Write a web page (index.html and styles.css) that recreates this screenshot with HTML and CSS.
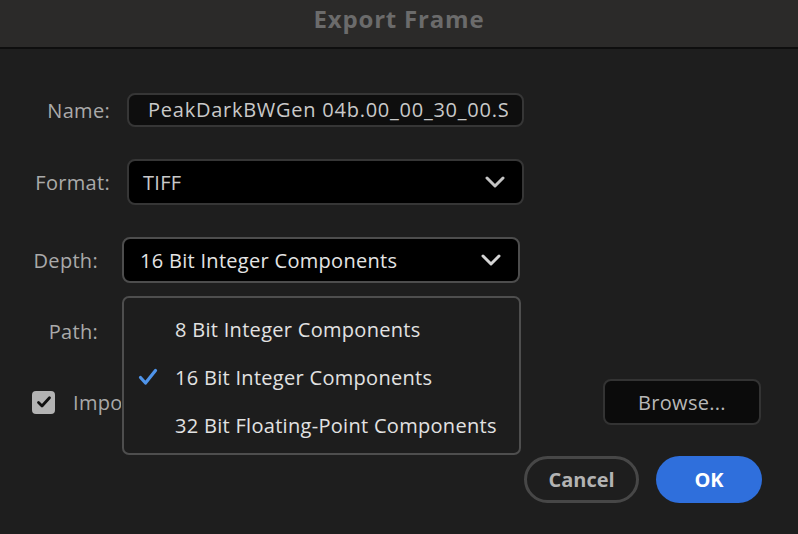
FILE: index.html
```html
<!DOCTYPE html>
<html>
<head>
<meta charset="utf-8">
<link rel="stylesheet" href="styles.css">
</head>
<body>
<div class="dialog">
  <div class="titlebar"><span class="title">Export Frame</span></div>
  <div class="form">
    <div class="row row-name">
      <label class="label label-wide">Name:</label>
      <div class="field field-name"><span class="name-text">PeakDarkBWGen 04b.00_00_30_00.S</span></div>
    </div>
    <div class="row row-format">
      <label class="label label-wide">Format:</label>
      <div class="field select select-format">
        <span class="select-text">TIFF</span>
        <svg class="chevron" width="20" height="12" viewBox="0 0 20 12"><path d="M2 2 L10 10 L18 2" fill="none" stroke="#c4c4c4" stroke-width="3" stroke-linecap="round" stroke-linejoin="round"/></svg>
      </div>
    </div>
    <div class="row row-depth">
      <label class="label label-narrow">Depth:</label>
      <div class="field select select-depth">
        <span class="select-text">16 Bit Integer Components</span>
        <svg class="chevron" width="20" height="12" viewBox="0 0 20 12"><path d="M2 2 L10 10 L18 2" fill="none" stroke="#d4d4d4" stroke-width="3" stroke-linecap="round" stroke-linejoin="round"/></svg>
      </div>
      <div class="menu">
        <div class="menu-item"><span class="check"></span>8 Bit Integer Components</div>
        <div class="menu-item selected"><span class="check"><svg width="20" height="18" viewBox="0 0 20 18"><path d="M2.5 9.5 L7.5 15 L17.5 2.5" fill="none" stroke="#4f94ea" stroke-width="3.2" stroke-linecap="round" stroke-linejoin="round"/></svg></span>16 Bit Integer Components</div>
        <div class="menu-item"><span class="check"></span>32 Bit Floating-Point Components</div>
      </div>
    </div>
    <div class="row row-path">
      <label class="label label-narrow">Path:</label>
      <div class="path-field"></div>
    </div>
    <div class="row row-import">
      <div class="checkbox-wrap">
        <span class="checkbox"><svg width="16" height="14" viewBox="0 0 16 14"><path d="M2.5 7.5 L6 11 L13.5 2.8" fill="none" stroke="#111" stroke-width="2.8" stroke-linecap="round" stroke-linejoin="round"/></svg></span>
        <span class="checkbox-label">Import into project</span>
      </div>
      <button class="btn-browse">Browse...</button>
    </div>
    <div class="row row-actions">
      <button class="btn-pill btn-cancel">Cancel</button>
      <button class="btn-pill btn-ok">OK</button>
    </div>
  </div>
</div>
</body>
</html>
```
FILE: styles.css
```css
* { box-sizing: border-box; }
html, body {
  margin: 0;
  padding: 0;
  background: #1e1e1e;
  width: 798px;
  height: 534px;
  overflow: hidden;
  font-family: "Open Sans", "Noto Sans", sans-serif;
}
.dialog {
  width: 798px;
  height: 534px;
  background: #1e1e1e;
}
.titlebar {
  height: 49px;
  background: #2b2a29;
  border-bottom: 2px solid #0e0e0e;
  display: flex;
  justify-content: center;
  align-items: center;
  padding-bottom: 10px;
}
.title {
  color: #6b6b6b;
  font-weight: 700;
  font-size: 24px;
  letter-spacing: 0.8px;
}
.form {
  position: relative;
  padding-top: 44px;
}
.row {
  display: flex;
  align-items: center;
}
.label {
  color: #aaaaaa;
  font-size: 20px;
  text-align: right;
  letter-spacing: 0.3px;
  white-space: nowrap;
}
.label-wide { width: 110px; margin-right: 17px; }
.label-narrow { width: 98px; margin-right: 24px; }
.field {
  border: 2px solid #363636;
  border-radius: 8px;
  color: #c9c9c9;
  font-size: 20px;
  letter-spacing: 0.3px;
  white-space: nowrap;
  overflow: hidden;
}
.field-name {
  width: 397px;
  height: 34px;
  background: #0e0e0e;
  padding-left: 19px;
  line-height: 29px;
}
.name-text {
  display: inline-block;
  width: 360px;
  overflow: hidden;
  letter-spacing: 0.75px;
  vertical-align: top;
}
.row-format { margin-top: 32px; }
.select {
  width: 397px;
  height: 46px;
  background: #000;
  display: flex;
  align-items: center;
  justify-content: space-between;
  padding-left: 14px;
  padding-right: 17px;
}
.select-depth {
  width: 398px;
  border-color: #4d4d4d;
  color: #e4e4e4;
  padding-left: 16px;
}
.row-depth { margin-top: 32px; position: relative; }
.menu {
  position: absolute;
  left: 122px;
  top: 59px;
  width: 399px;
  height: 159px;
  background: #1d1d1d;
  border: 2px solid #4e4e4e;
  border-radius: 7px;
  padding-top: 7px;
  z-index: 5;
}
.menu-item {
  height: 48px;
  display: flex;
  align-items: center;
  color: #e2e2e2;
  font-size: 20px;
  letter-spacing: 0.3px;
  white-space: nowrap;
}
.check {
  width: 51px;
  padding-left: 14px;
  display: flex;
  align-items: center;
}
.row-path { margin-top: 24px; height: 48px; }
.path-field {
  width: 397px;
  height: 34px;
}
.row-import {
  margin-top: 24px;
  height: 46px;
  justify-content: space-between;
  padding-left: 32px;
  padding-right: 37px;
}
.checkbox-wrap { display: flex; align-items: center; }
.checkbox {
  width: 23px;
  height: 23px;
  background: #b3b3b3;
  border-radius: 4px;
  display: flex;
  align-items: center;
  justify-content: center;
  margin-right: 18px;
}
.checkbox-label {
  color: #a9a9a9;
  font-size: 20px;
  letter-spacing: 0.3px;
  white-space: nowrap;
  display: inline-block;
  width: 48px;
  overflow: hidden;
}
.btn-browse {
  width: 158px;
  height: 46px;
  background: #0b0b0b;
  border: 2px solid #333;
  border-radius: 8px;
  color: #b8b8b8;
  font-family: inherit;
  font-size: 20px;
  letter-spacing: 0.3px;
}
.row-actions {
  margin-top: 31px;
  justify-content: flex-end;
  padding-right: 36px;
  gap: 17px;
}
.btn-pill {
  height: 47px;
  border-radius: 24px;
  font-family: inherit;
  font-size: 20px;
  font-weight: 700;
}
.btn-cancel {
  width: 115px;
  background: transparent;
  border: 3px solid #474747;
  color: #b3b3b3;
}
.btn-ok {
  width: 106px;
  background: #2f6fdc;
  border: none;
  color: #fff;
}
```
